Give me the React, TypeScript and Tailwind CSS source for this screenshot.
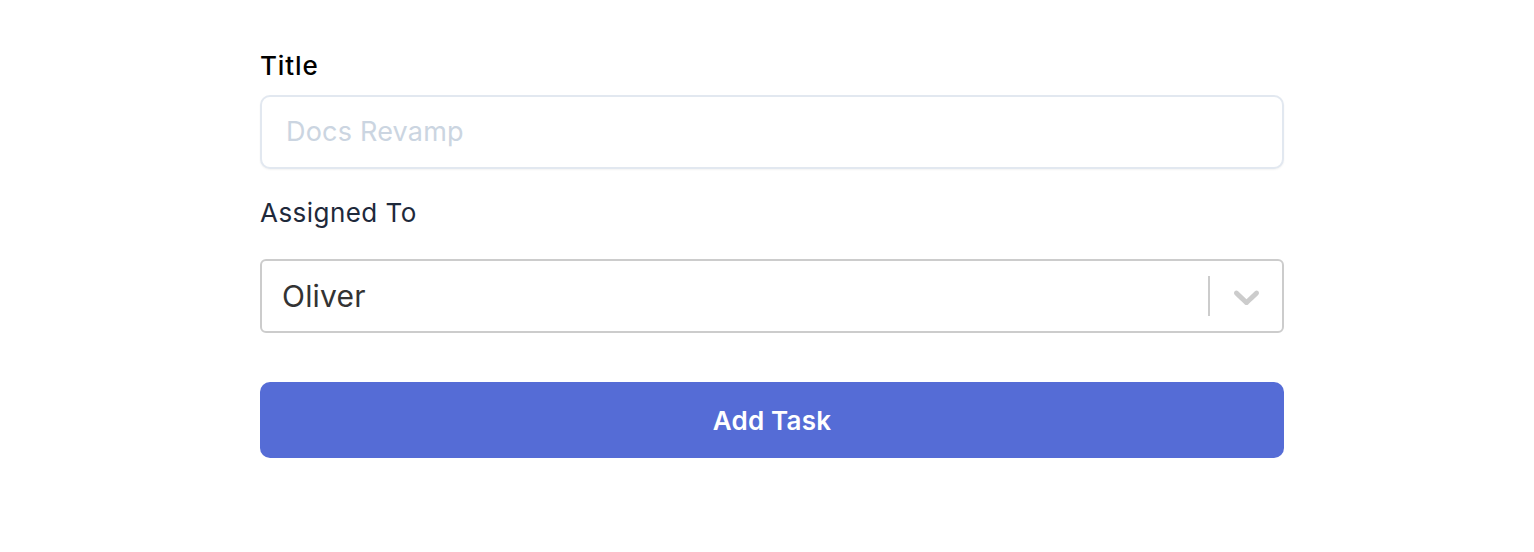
import React from "react";

export default function App() {
  return (
    <div className="min-h-[552px] w-full bg-white" style={{ fontFamily: "Inter, 'Noto Sans', sans-serif" }}>
      <div className="mx-auto w-[1034px] pl-[10px] pt-[48px]">
        <div className="text-[26px] font-medium leading-[36px] tracking-[0.9px] text-black">Title</div>
        <div className="mt-[11px] h-[74px] rounded-[10px] border-2 border-[#e2e8f0] bg-white shadow-[0_1px_2px_rgba(0,0,0,0.05)] flex items-center px-[24px]">
          <span className="text-[27px] tracking-[0.2px] text-[#cbd5e1]">Docs Revamp</span>
        </div>
        <div className="mt-[26px] text-[26px] leading-[36px] tracking-[0.45px] text-[#1e293b]">Assigned To</div>
        <div className="mt-[28px] flex h-[74px] items-center rounded-[6px] border-2 border-[#cccccc] bg-white">
          <span className="flex-1 pl-[20px] text-[30px] tracking-[0.2px] text-[#333333]">Oliver</span>
          <span className="h-[40px] w-[2px] bg-[#cccccc]" />
          <span className="flex w-[72px] items-center justify-center text-[#cccccc]">
            <svg width="43" height="43" viewBox="0 0 20 20" fill="currentColor">
              <path d="M4.516 7.548c0.436-0.446 1.043-0.481 1.576 0l3.908 3.747 3.908-3.747c0.533-0.481 1.141-0.446 1.574 0 0.436 0.445 0.408 1.197 0 1.615-0.406 0.418-4.695 4.502-4.695 4.502-0.217 0.223-0.502 0.335-0.787 0.335s-0.57-0.112-0.789-0.335c0 0-4.287-4.084-4.695-4.502s-0.436-1.170 0-1.615z" />
            </svg>
          </span>
        </div>
        <button className="mt-[49px] flex h-[76px] w-full items-center justify-center rounded-[10px] bg-[#556cd6] text-[26px] font-semibold tracking-[0.2px] text-white">
          Add Task
        </button>
      </div>
    </div>
  );
}
